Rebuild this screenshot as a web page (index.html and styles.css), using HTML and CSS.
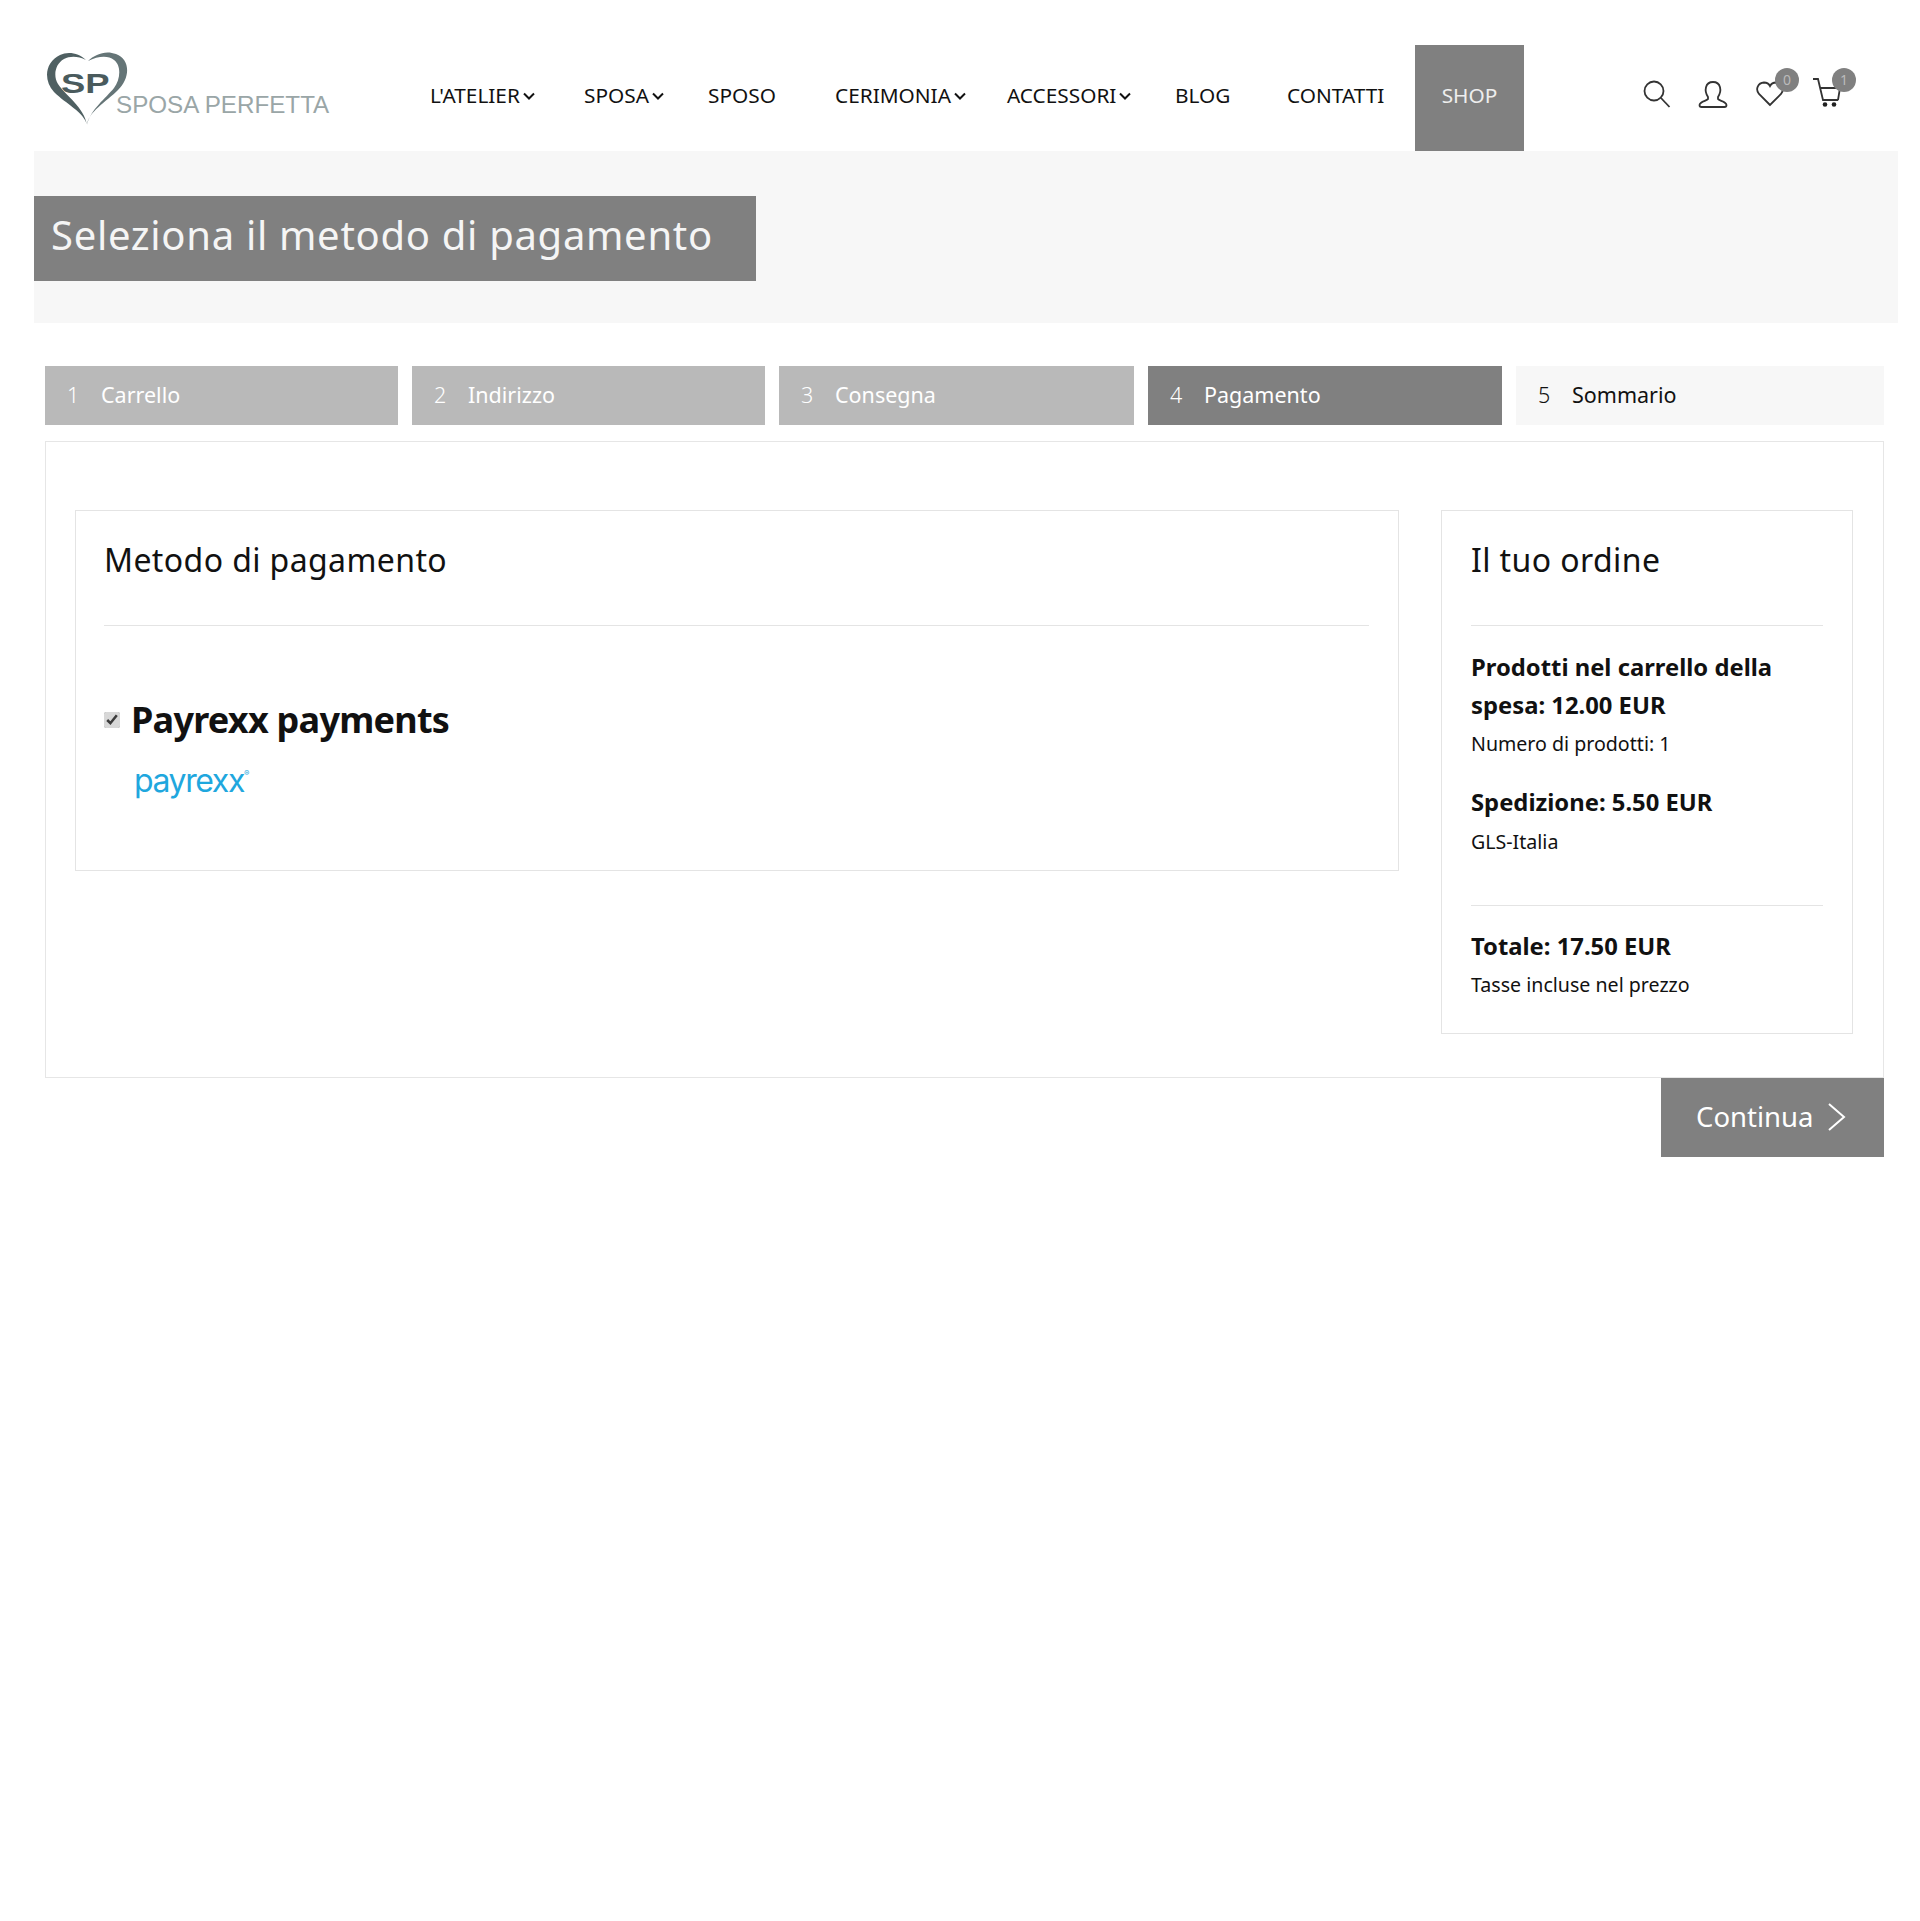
FILE: index.html
```html
<!DOCTYPE html>
<html lang="it">
<head>
	<meta charset="utf-8">
	<title>Seleziona il metodo di pagamento</title>
	<link rel="stylesheet" href="styles.css">
</head>
<body>
	<header class="site-header">
		<a class="logo" href="#">
			<svg class="logo-heart" width="84" height="76" viewBox="0 0 84 76">
				<path d="M41 73C38 60 20 52 8 40C-3 28-1 10 14 3C22-1 33 1 40 8C32 4 24 4 18 7C9 12 7 24 12 32C20 44 38 55 41 73Z" fill="#4f6062"/>
				<path d="M41 73C42 60 60 50 72 38C84 26 85 8 70 2C60-2 49 2 42 9C52 4 62 3 68 8C76 14 74 28 68 36C60 46 44 58 41 73Z" fill="#657577"/>
			</svg>
			<span class="logo-sp">SP</span>
			<span class="logo-name">SPOSA PERFETTA</span>
		</a>
		<nav class="main-nav">
			<a href="#">L'ATELIER<svg class="chev" width="12" height="8" viewBox="0 0 12 8"><path d="M1 1.5l5 5 5-5" fill="none" stroke="#111" stroke-width="2"/></svg></a>
			<a href="#">SPOSA<svg class="chev" width="12" height="8" viewBox="0 0 12 8"><path d="M1 1.5l5 5 5-5" fill="none" stroke="#111" stroke-width="2"/></svg></a>
			<a href="#">SPOSO</a>
			<a href="#">CERIMONIA<svg class="chev" width="12" height="8" viewBox="0 0 12 8"><path d="M1 1.5l5 5 5-5" fill="none" stroke="#111" stroke-width="2"/></svg></a>
			<a href="#">ACCESSORI<svg class="chev" width="12" height="8" viewBox="0 0 12 8"><path d="M1 1.5l5 5 5-5" fill="none" stroke="#111" stroke-width="2"/></svg></a>
			<a href="#">BLOG</a>
			<a href="#">CONTATTI</a>
			<a href="#" class="shop">SHOP</a>
		</nav>
		<div class="tools">
			<a href="#" class="tool">
				<svg width="30" height="30" viewBox="0 0 30 30"><circle cx="13" cy="11" r="9.5" fill="none" stroke="#333" stroke-width="1.8"/><path d="M20 18l8.5 9" stroke="#333" stroke-width="1.8"/></svg>
			</a>
			<a href="#" class="tool">
				<svg width="30" height="30" viewBox="0 0 30 30"><path d="M10 17C6 11 7 2 15 2C23 2 24 11 20 17V19C21 21 28 21 28.500 25C28.500 27 27.500 27 26.500 27H3.500C2.500 27 1.500 27 1.500 25C2 21 9 21 10 19Z" fill="none" stroke="#333" stroke-width="1.8"/></svg>
			</a>
			<a href="#" class="tool">
				<svg width="30" height="30" viewBox="0 0 30 30"><path d="M15 25L4 14C0 9 3 3 9 2.500C12 2.500 14 4 15 6C16 4 18 2.500 21 2.500C27 3 30 9 26 14Z" fill="none" stroke="#333" stroke-width="1.8"/></svg>
				<span class="badge">0</span>
			</a>
			<a href="#" class="tool">
				<svg width="30" height="30" viewBox="0 0 30 30"><path d="M1-1H6L11 20H26M8 8H28L26 20" fill="none" stroke="#333" stroke-width="1.8"/><circle cx="13" cy="24.500" r="2.300" fill="#222"/><circle cx="22" cy="24.500" r="2.300" fill="#222"/></svg>
				<span class="badge">1</span>
			</a>
		</div>
	</header>

	<section class="title-band">
		<h1>Seleziona il metodo di pagamento</h1>
	</section>

	<div class="checkout">
		<ol class="steps">
			<li class="done"><span>1</span>Carrello</li>
			<li class="done"><span>2</span>Indirizzo</li>
			<li class="done"><span>3</span>Consegna</li>
			<li class="current"><span>4</span>Pagamento</li>
			<li><span>5</span>Sommario</li>
		</ol>

		<div class="main-box">
			<section class="card pay-card">
				<h2>Metodo di pagamento</h2>
				<label class="pay-option">
					<input type="checkbox" checked>
					<strong>Payrexx payments</strong>
				</label>
				<div class="payrexx-logo">payrexx<sup>®</sup></div>
			</section>
			<aside class="card order-card">
				<h2>Il tuo ordine</h2>
				<div class="order-lines">
					<h3>Prodotti nel carrello della spesa: 12.00 EUR</h3>
					<p>Numero di prodotti: 1</p>
					<h3 class="ship">Spedizione: 5.50 EUR</h3>
					<p class="carrier">GLS-Italia</p>
				</div>
				<div class="order-total">
					<h3>Totale: 17.50 EUR</h3>
					<p>Tasse incluse nel prezzo</p>
				</div>
			</aside>
		</div>

		<div class="actions">
			<a href="#" class="btn-next">Continua<svg width="20" height="30" viewBox="0 0 20 30"><path d="M2 2l15 13L2 28" fill="none" stroke="#fff" stroke-width="2"/></svg></a>
		</div>
	</div>
</body>
</html>
```
FILE: styles.css
```css
* { box-sizing: border-box; }
body { margin: 0; background: #fff; color: #111; font-family: "Noto Sans", "Open Sans", sans-serif; min-height: 1921px; }
a { color: inherit; text-decoration: none; }
h1, h2, h3, p, ol { margin: 0; padding: 0; }

.site-header { display: flex; height: 151px; padding-left: 46px; }
.logo { position: relative; display: block; width: 384px; height: 151px; }
.logo-heart { position: absolute; left: 0; top: 52px; }
.logo-sp { position: absolute; left: 15px; top: 68px; font: bold 28px "Liberation Sans", sans-serif; color: #4a5b5d; transform: scaleX(1.3); transform-origin: left; }
.logo-name { position: absolute; left: 70px; top: 91px; font: 24.2px "Liberation Sans", sans-serif; color: #9aa6a7; white-space: nowrap; }

.main-nav { display: grid; grid-template-columns: 154px 124px 127px 172px 168px 112px 128px 109px; padding-top: 45px; font-size: 20.8px; }
.main-nav a { display: flex; align-items: center; gap: 3px; height: 106px; padding-bottom: 7px; }
.main-nav .shop { justify-content: center; background: #808080; color: #eee; }
.chev { margin-top: 2px; }

.tools { display: flex; gap: 27px; margin-left: 117px; padding-top: 80px; }
.tool { position: relative; display: block; width: 30px; height: 30px; }
.tool svg { overflow: visible; }
.badge { position: absolute; left: 20px; top: -12px; width: 24px; height: 24px; border-radius: 50%; background: #808080; color: #bbb; font-size: 14px; line-height: 24px; text-align: center; }

.title-band { height: 172px; margin: 0 22px 0 34px; padding-top: 45px; background: #f7f7f7; }
.title-band h1 { width: 722px; height: 85px; padding: 15px 0 0 17px; background: #808080; color: #f5f5f5; font-size: 40px; line-height: 48px; font-weight: 400; letter-spacing: .7px; }

.checkout { margin: 43px 36px 0 45px; }
.steps { display: grid; grid-template-columns: 353px 353px 355px 354px 1fr; gap: 14px; list-style: none; font-size: 21.5px; }
.steps li { display: flex; align-items: center; height: 59px; padding: 0 0 2px 22px; background: #f7f7f7; }
.steps span { width: 34px; font-weight: 300; }
.steps .done { background: #b9b9b9; color: #fff; }
.steps .current { background: #808080; color: #fff; }

.main-box { display: flex; justify-content: space-between; align-items: flex-start; height: 637px; margin-top: 16px; padding: 68px 30px 0 29px; border: 1px solid #e6e6e6; }
.card { border: 1px solid #e4e4e4; padding: 28px 29px 0 28px; }
.card h2 { height: 87px; border-bottom: 1px solid #e4e4e4; font-size: 32px; line-height: 42px; font-weight: 400; letter-spacing: .4px; }
.pay-card { width: 1324px; height: 361px; }
.order-card { width: 412px; height: 524px; padding-left: 29px; }

.pay-option { display: flex; align-items: center; gap: 11px; margin-top: 72px; }
.pay-option input { width: 16px; height: 16px; margin: 0; accent-color: #d8d8d8; }
.pay-option strong { font-size: 36px; line-height: 44px; letter-spacing: -.75px; }
.payrexx-logo { margin: 19px 0 0 30px; color: #1fa7de; font: 400 32px/40px Inter, sans-serif; letter-spacing: -1.4px; }
.payrexx-logo sup { font-size: 8px; vertical-align: 16px; line-height: 0; }

.order-lines { height: 280px; padding-top: 22px; border-bottom: 1px solid #e4e4e4; }
.order-card h3 { font-size: 23.8px; line-height: 38px; font-weight: 700; }
.order-card p { margin-top: 6px; font-size: 19.6px; line-height: 28px; }
.order-card .ship { margin-top: 25px; }
.order-card .carrier { margin-top: 7px; }
.order-total { padding-top: 21px; }

.actions { display: flex; justify-content: flex-end; }
.btn-next { display: flex; align-items: center; gap: 14px; width: 223px; height: 79px; padding: 0 0 2px 35px; background: #808080; color: #fff; font-size: 27.5px; }
```
